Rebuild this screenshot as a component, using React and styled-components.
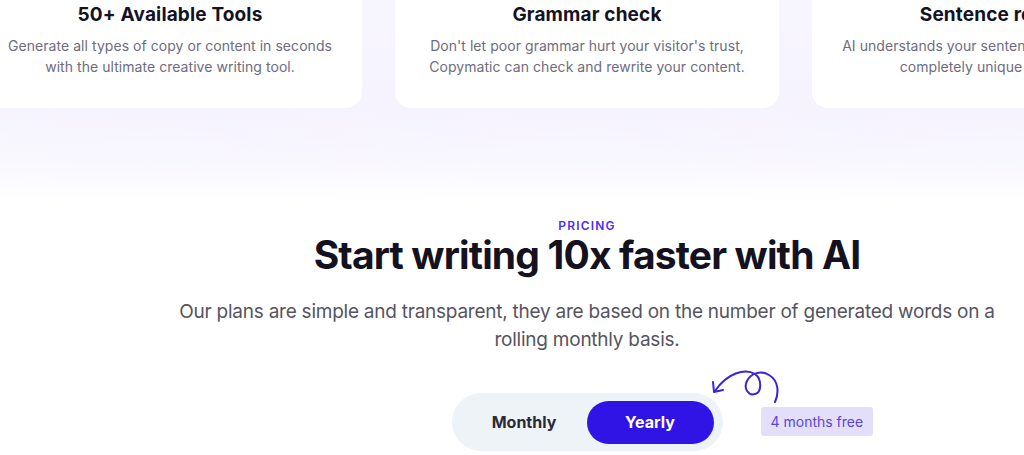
import React, { useState } from "react";
import { styled, createGlobalStyle } from "styled-components";

const GlobalStyle = createGlobalStyle`
  body {
    margin: 0;
    background: #ffffff;
    overflow: hidden;
    font-family: "Inter", "Noto Sans", sans-serif;
  }
`;

const Page = styled.div`
  width: 1174px;
  height: 455px;
`;

const Features = styled.section`
  padding-bottom: 110px;
  background:
    radial-gradient(ellipse 420px 95px at 170px 108px, rgba(245, 242, 253, 0.8), rgba(255, 255, 255, 0) 100%),
    radial-gradient(ellipse 420px 95px at 587px 108px, rgba(245, 242, 253, 0.8), rgba(255, 255, 255, 0) 100%),
    radial-gradient(ellipse 420px 95px at 1004px 108px, rgba(245, 242, 253, 0.8), rgba(255, 255, 255, 0) 100%),
    linear-gradient(#f7f5fe 0, #f7f5fe 108px, #fbfaff 160px, #ffffff 205px);
`;

const CardRow = styled.div`
  display: flex;
  justify-content: center;
  gap: 33px;
`;

const Card = styled.div`
  flex: 0 0 384px;
  height: 108px;
  box-sizing: border-box;
  background: #ffffff;
  border-radius: 0 0 16px 16px;
  text-align: center;
  padding-top: 3px;
`;

const CardTitle = styled.h3`
  margin: 0;
  font-size: 19px;
  line-height: 24px;
  font-weight: 700;
  letter-spacing: 0.15px;
  color: #14121f;
`;

const CardText = styled.p`
  margin: 8px 0 0;
  font-size: 14px;
  line-height: 21px;
  letter-spacing: 0.05px;
  color: #6e6c7e;
`;

const Pricing = styled.section`
  display: flex;
  flex-direction: column;
  align-items: center;
  text-align: center;
`;

const Eyebrow = styled.span`
  font-size: 12px;
  line-height: 16px;
  font-weight: 600;
  letter-spacing: 1.2px;
  color: #4f2ff0;
`;

const Heading = styled.h2`
  margin: -3px 0 0;
  font-size: 39px;
  line-height: 48px;
  font-weight: 700;
  letter-spacing: -0.85px;
  color: #14121f;
`;

const Lead = styled.p`
  margin: 19px 0 0;
  width: 840px;
  font-size: 19px;
  line-height: 28px;
  font-weight: 400;
  letter-spacing: -0.24px;
  color: #55545f;
`;

const ToggleRow = styled.div`
  position: relative;
  margin-top: 39px;
  display: flex;
  align-items: center;
`;

const Toggle = styled.div`
  display: flex;
  align-items: center;
  height: 58px;
  box-sizing: border-box;
  padding: 0 9px 0 0;
  border-radius: 29px;
  background: #eef3f7;
`;

const ToggleButton = styled.button`
  border: 0;
  cursor: pointer;
  height: 43px;
  width: ${(p) => (p.$wide ? "135px" : "127px")};
  padding: 0 0 0 ${(p) => (p.$wide ? "10px" : "0")};
  border-radius: 22px;
  font-family: inherit;
  font-size: 16px;
  font-weight: 700;
  background: ${(p) => (p.$active ? "#2f14e5" : "transparent")};
  color: ${(p) => (p.$active ? "#ffffff" : "#2b2a33")};
`;

const Badge = styled.span`
  position: absolute;
  left: 309px;
  top: 14px;
  padding: 0 10px;
  height: 29px;
  line-height: 29px;
  border-radius: 3px;
  background: #e3dff9;
  color: #5b45d6;
  font-size: 14px;
  white-space: nowrap;
`;

const Arrow = styled.svg`
  position: absolute;
  left: 253px;
  top: -28px;
`;

const features = [
  {
    title: "50+ Available Tools",
    text: ["Generate all types of copy or content in seconds", "with the ultimate creative writing tool."],
  },
  {
    title: "Grammar check",
    text: ["Don't let poor grammar hurt your visitor's trust,", "Copymatic can check and rewrite your content."],
  },
  {
    title: "Sentence rewriter",
    text: ["AI understands your sentences and rewrite them", "completely unique and original."],
  },
];

export default function App() {
  const [plan, setPlan] = useState("yearly");
  return (
    <Page>
      <GlobalStyle />
      <Features>
        <CardRow>
          {features.map((f) => (
            <Card key={f.title}>
              <CardTitle>{f.title}</CardTitle>
              <CardText>
                {f.text[0]}
                <br />
                {f.text[1]}
              </CardText>
            </Card>
          ))}
        </CardRow>
      </Features>
      <Pricing>
        <Eyebrow>PRICING</Eyebrow>
        <Heading>Start writing 10x faster with AI</Heading>
        <Lead>
          Our plans are simple and transparent, they are based on the number of generated words on a rolling monthly
          basis.
        </Lead>
        <ToggleRow>
          <Toggle>
            <ToggleButton $wide $active={plan === "monthly"} onClick={() => setPlan("monthly")}>
              Monthly
            </ToggleButton>
            <ToggleButton $active={plan === "yearly"} onClick={() => setPlan("yearly")}>
              Yearly
            </ToggleButton>
          </Toggle>
          <Arrow width="80" height="42" viewBox="0 0 80 42" fill="none">
            <path
              d="M70 37 C74 28 74 16 64 10 C56 5 46 8 42 16 C38 24 44 31 50 29 C57 27 57 14 50 9 C40 3 22 8 10 26"
              stroke="#3a22e0"
              strokeWidth="2"
              strokeLinecap="round"
            />
            <path d="M8 17 L9 27 L18 25" stroke="#3a22e0" strokeWidth="2" strokeLinecap="round" strokeLinejoin="round" />
          </Arrow>
          <Badge>4 months free</Badge>
        </ToggleRow>
      </Pricing>
    </Page>
  );
}
